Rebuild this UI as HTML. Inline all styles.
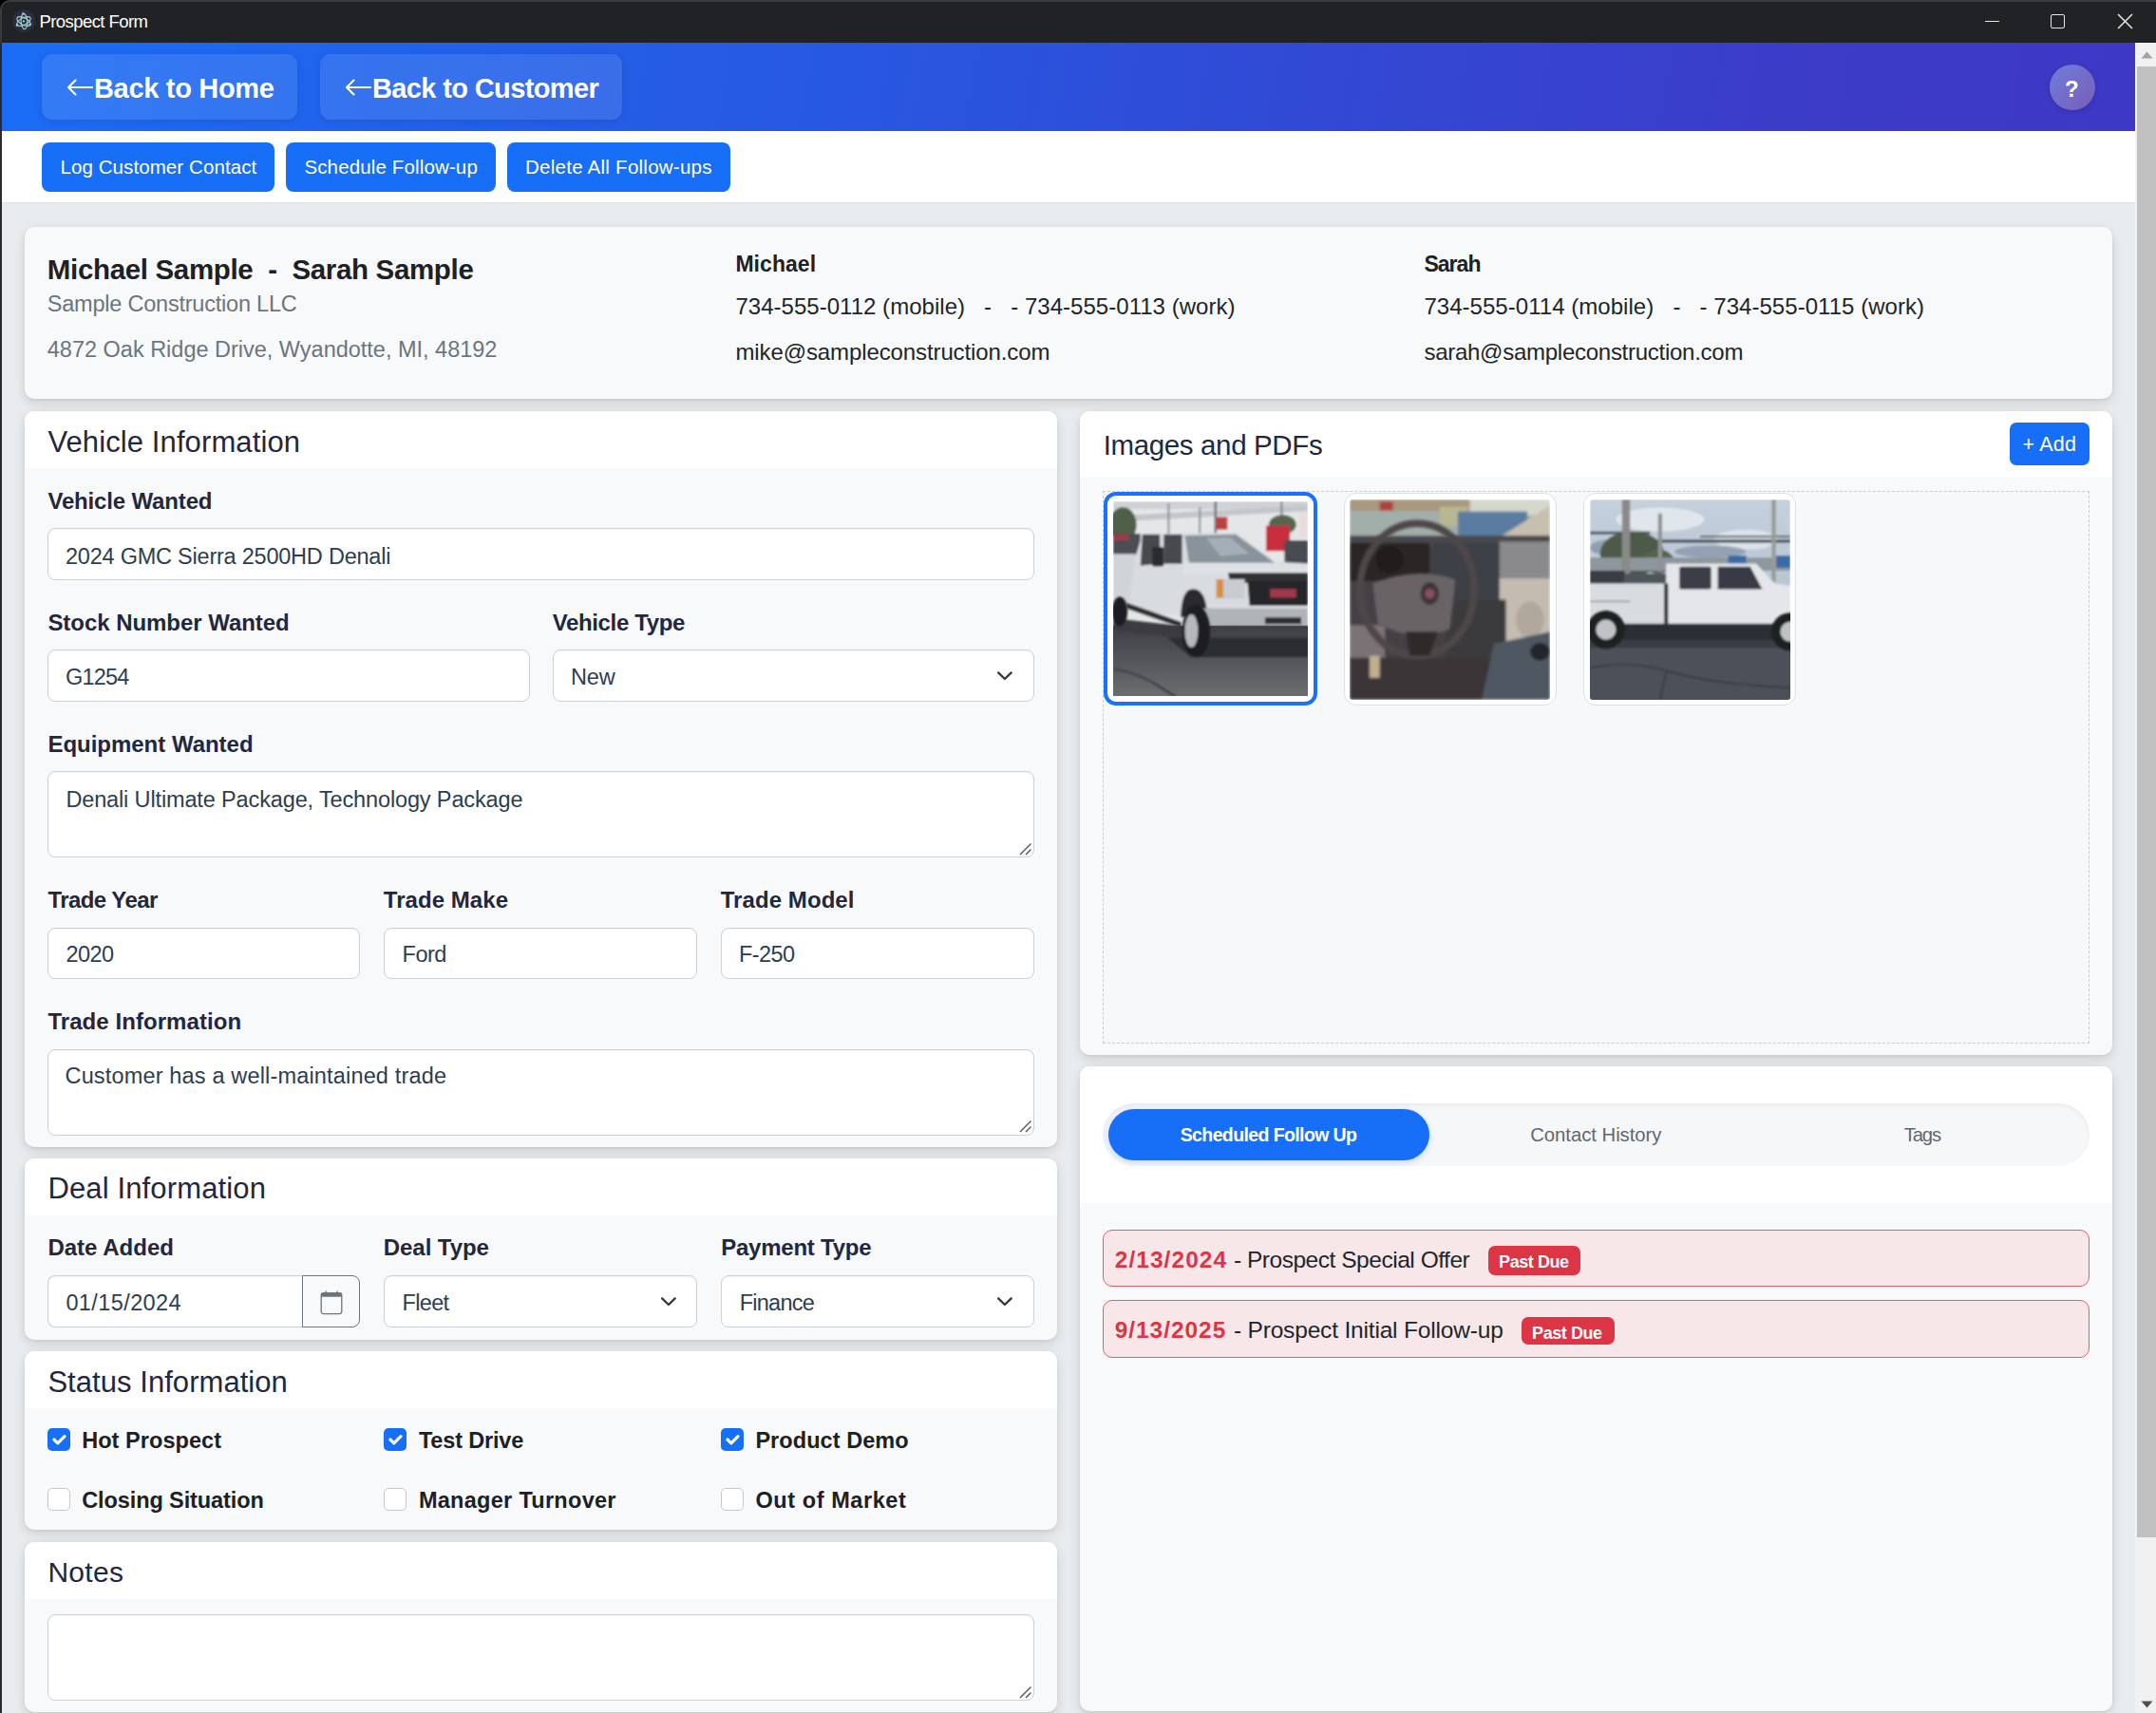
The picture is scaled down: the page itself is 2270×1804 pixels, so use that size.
<!DOCTYPE html>
<html><head><meta charset="utf-8"><title>Prospect Form</title>
<style>
html,body{margin:0;padding:0;}
body{width:2270px;height:1804px;overflow:hidden;position:relative;background:#e9ecef;font-family:"Liberation Sans",sans-serif;}
.t{position:absolute;line-height:1;white-space:pre;}
.b{position:absolute;box-sizing:border-box;}
.card{position:absolute;box-sizing:border-box;background:#f8f9fa;border-radius:10px;box-shadow:0 4px 12px rgba(0,0,0,0.13),0 1px 3px rgba(0,0,0,0.06);overflow:hidden;}
.ch{position:absolute;left:0;top:0;right:0;background:#fff;}
.inp{position:absolute;box-sizing:border-box;background:#fff;border:1.5px solid #cdd1d6;border-radius:8px;box-shadow:inset 0 1px 2px rgba(0,0,0,0.05);}
.btn{position:absolute;box-sizing:border-box;background:#176ef7;border-radius:8px;}
.cb{position:absolute;box-sizing:border-box;width:24px;height:24px;border-radius:5px;}
.cb.on{background:#176ef7;}
.cb.off{background:#fff;border:1.5px solid #c4c8cc;}
</style></head><body>

<div class="b" style="left:0.0px;top:0.0px;width:2270.0px;height:60.0px;background:#000;"></div>
<div class="b" style="left:0.0px;top:0.0px;width:2290.0px;height:60.0px;background:#202226;border:2px solid #3a3a3c;border-bottom:none;border-radius:10px 10px 0 0;"></div>
<div class="b" style="left:0.0px;top:45.0px;width:2.0px;height:1759.0px;background:#2b2b2d;"></div>
<svg class="b" style="left:13px;top:10px;" width="24" height="24" viewBox="0 0 24 24"><circle cx="12" cy="12" r="12" fill="#2b2d3a"/><g fill="none" stroke="#9fcfd8" stroke-width="1.15"><ellipse cx="12" cy="12.5" rx="8" ry="3.6" transform="rotate(28 12 12.5)"/><ellipse cx="12" cy="12.5" rx="8" ry="3.6" transform="rotate(-28 12 12.5)"/><ellipse cx="12.5" cy="12.5" rx="3.3" ry="8.2" transform="rotate(-4 12.5 12.5)"/></g><circle cx="12" cy="12.4" r="1.1" fill="#9fcfd8"/><circle cx="11.5" cy="4.5" r="1.3" fill="#9fcfd8"/><circle cx="5" cy="16.5" r="1.3" fill="#9fcfd8"/><circle cx="18.5" cy="16" r="1.3" fill="#9fcfd8"/></svg>
<div class="t" style="left:41.4px;top:14.0px;font-size:18.5px;font-weight:400;color:#ffffff;letter-spacing:-0.558px;">Prospect Form</div>
<div class="b" style="left:2089.5px;top:21.5px;width:15.5px;height:1.2px;background:#e8e8e8;"></div>
<div class="b" style="left:2159.0px;top:15.0px;width:15.0px;height:15.0px;border:1.5px solid #e8e8e8;border-radius:2px;"></div>
<svg class="b" style="left:2229px;top:14px;" width="17" height="17" viewBox="0 0 17 17"><path d="M1 1L16 16M16 1L1 16" stroke="#e8e8e8" stroke-width="1.5"/></svg>
<div class="b" style="left:2.0px;top:45.0px;width:2246.0px;height:93.0px;background:linear-gradient(100deg,#1b6df5 0%,#2857e1 40%,#3347d3 65%,#3c3cc8 85%,#3e38c6 100%);"></div>
<div class="b" style="left:44.0px;top:57.0px;width:269.0px;height:69.0px;background:rgba(255,255,255,0.10);border-radius:11px;box-shadow:0 2px 8px rgba(0,0,0,0.10);"></div>
<div class="b" style="left:337.0px;top:57.0px;width:318.0px;height:69.0px;background:rgba(255,255,255,0.10);border-radius:11px;box-shadow:0 2px 8px rgba(0,0,0,0.10);"></div>
<svg class="b" style="left:69.6px;top:83.0px;" width="28" height="18" viewBox="0 0 28 18"><path d="M27 9H2M9.5 1.5L2 9L9.5 16.5" fill="none" stroke="#fff" stroke-width="2.1" stroke-linecap="round" stroke-linejoin="round"/></svg>
<div class="t" style="left:99.0px;top:78.8px;font-size:29px;font-weight:700;color:#ffffff;letter-spacing:-0.318px;">Back to Home</div>
<svg class="b" style="left:362.6px;top:83.0px;" width="28" height="18" viewBox="0 0 28 18"><path d="M27 9H2M9.5 1.5L2 9L9.5 16.5" fill="none" stroke="#fff" stroke-width="2.1" stroke-linecap="round" stroke-linejoin="round"/></svg>
<div class="t" style="left:392.0px;top:78.8px;font-size:29px;font-weight:700;color:#ffffff;letter-spacing:-0.63px;">Back to Customer</div>
<div class="b" style="left:2158px;top:68px;width:48px;height:48px;border-radius:50%;background:linear-gradient(135deg,#6f7ddd 0%,#7a5db6 100%);box-shadow:0 2px 6px rgba(0,0,0,0.15);"></div>
<div class="t" style="left:2173.9px;top:81.7px;font-size:24px;font-weight:700;color:#ffffff;">?</div>
<div class="b" style="left:2.0px;top:138.0px;width:2246.0px;height:76.0px;background:#ffffff;border-bottom:1.5px solid #dfe3e7;"></div>
<div class="b" style="left:44.0px;top:150.0px;width:245.0px;height:52.0px;background:#176ef7;border-radius:8px;"></div>
<div class="b" style="left:301.0px;top:150.0px;width:221.0px;height:52.0px;background:#176ef7;border-radius:8px;"></div>
<div class="b" style="left:534.0px;top:150.0px;width:235.0px;height:52.0px;background:#176ef7;border-radius:8px;"></div>
<div class="t" style="left:63.4px;top:166.2px;font-size:20.5px;font-weight:400;color:#ffffff;letter-spacing:0.095px;">Log Customer Contact</div>
<div class="t" style="left:320.4px;top:166.2px;font-size:20.5px;font-weight:400;color:#ffffff;letter-spacing:0.138px;">Schedule Follow-up</div>
<div class="t" style="left:553.0px;top:166.2px;font-size:20.5px;font-weight:400;color:#ffffff;letter-spacing:0.255px;">Delete All Follow-ups</div>
<div class="b" style="left:2248.0px;top:45.0px;width:22.0px;height:1759.0px;background:#f1f1f1;"></div>
<div class="b" style="left:2250.0px;top:70.0px;width:20.0px;height:1548.6px;background:#c1c1c1;"></div>
<svg class="b" style="left:2254px;top:54px;" width="13" height="8" viewBox="0 0 13 8"><path d="M0.5 7.5L6.5 0.5L12.5 7.5Z" fill="#a3a3a3"/></svg>
<svg class="b" style="left:2254px;top:1791px;" width="13" height="8" viewBox="0 0 13 8"><path d="M0.5 0.5L6.5 7.5L12.5 0.5Z" fill="#505050"/></svg>
<div class="card" style="left:26px;top:239px;width:2198px;height:181px;"></div>
<div class="t" style="left:49.8px;top:268.5px;font-size:29.5px;font-weight:700;color:#1d2024;letter-spacing:-0.335px;">Michael Sample  -  Sarah Sample</div>
<div class="t" style="left:49.8px;top:308.9px;font-size:23.5px;font-weight:400;color:#6c757d;letter-spacing:-0.22px;">Sample Construction LLC</div>
<div class="t" style="left:49.8px;top:356.8px;font-size:23.5px;font-weight:400;color:#6c757d;letter-spacing:-0.009px;">4872 Oak Ridge Drive, Wyandotte, MI, 48192</div>
<div class="t" style="left:774.4px;top:267.4px;font-size:23px;font-weight:700;color:#1d2024;letter-spacing:0.058px;">Michael</div>
<div class="t" style="left:774.4px;top:310.7px;font-size:24px;font-weight:400;color:#212529;letter-spacing:0.029px;">734-555-0112 (mobile)   -   - 734-555-0113 (work)</div>
<div class="t" style="left:774.4px;top:358.7px;font-size:24px;font-weight:400;color:#212529;letter-spacing:-0.104px;">mike@sampleconstruction.com</div>
<div class="t" style="left:1499.4px;top:267.4px;font-size:23px;font-weight:700;color:#1d2024;letter-spacing:-0.95px;">Sarah</div>
<div class="t" style="left:1499.4px;top:310.6px;font-size:24px;font-weight:400;color:#212529;letter-spacing:0.04px;">734-555-0114 (mobile)   -   - 734-555-0115 (work)</div>
<div class="t" style="left:1499.4px;top:358.9px;font-size:24px;font-weight:400;color:#212529;letter-spacing:-0.265px;">sarah@sampleconstruction.com</div>
<div class="card" style="left:26px;top:433px;width:1087px;height:774.5px;"><div class="ch" style="height:60px;"></div></div>
<div class="t" style="left:50.4px;top:449.5px;font-size:31px;font-weight:400;color:#23273d;letter-spacing:0.108px;">Vehicle Information</div>
<div class="t" style="left:50.4px;top:515.7px;font-size:24px;font-weight:700;color:#23273d;letter-spacing:-0.158px;">Vehicle Wanted</div>
<div class="inp" style="left:50.0px;top:556.4px;width:1039.0px;height:55.1px;"></div>
<div class="t" style="left:69.0px;top:574.6px;font-size:23.5px;font-weight:400;color:#2c3e50;letter-spacing:-0.227px;">2024 GMC Sierra 2500HD Denali</div>
<div class="t" style="left:50.4px;top:643.7px;font-size:24px;font-weight:700;color:#23273d;letter-spacing:-0.042px;">Stock Number Wanted</div>
<div class="t" style="left:581.7px;top:643.7px;font-size:24px;font-weight:700;color:#23273d;letter-spacing:-0.359px;">Vehicle Type</div>
<div class="inp" style="left:50.0px;top:684.4px;width:507.5px;height:55.1px;"></div>
<div class="inp" style="left:582.3px;top:684.4px;width:506.7px;height:55.1px;"></div>
<div class="t" style="left:69.0px;top:702.1px;font-size:23.5px;font-weight:400;color:#2c3e50;letter-spacing:-0.787px;">G1254</div>
<div class="t" style="left:601.1px;top:702.1px;font-size:23.5px;font-weight:400;color:#2c3e50;letter-spacing:-0.25px;">New</div>
<svg class="b" style="left:1049px;top:705px;" width="18" height="12" viewBox="0 0 18 12"><path d="M2.1 3.4L8.9 10L15.7 3.4" fill="none" stroke="#343a40" stroke-width="2.4" stroke-linecap="round" stroke-linejoin="round"/></svg>
<div class="t" style="left:50.4px;top:772.3px;font-size:24px;font-weight:700;color:#23273d;letter-spacing:-0.017px;">Equipment Wanted</div>
<div class="inp" style="left:50.0px;top:812.3px;width:1039.0px;height:91.0px;"></div>
<div class="t" style="left:69.4px;top:830.6px;font-size:23.5px;font-weight:400;color:#2c3e50;letter-spacing:-0.136px;">Denali Ultimate Package, Technology Package</div>
<svg class="b" style="left:1073px;top:887px;" width="14" height="14" viewBox="0 0 14 14"><path d="M1 13L12.5 1.5M7 13L12.5 7.5" stroke="#555" stroke-width="1.4"/></svg>
<div class="t" style="left:50.4px;top:935.7px;font-size:24px;font-weight:700;color:#23273d;letter-spacing:-0.556px;">Trade Year</div>
<div class="t" style="left:403.8px;top:935.7px;font-size:24px;font-weight:700;color:#23273d;letter-spacing:0.05px;">Trade Make</div>
<div class="t" style="left:758.7px;top:936.2px;font-size:24px;font-weight:700;color:#23273d;letter-spacing:0.075px;">Trade Model</div>
<div class="inp" style="left:50.0px;top:976.5px;width:329.4px;height:54.9px;"></div>
<div class="inp" style="left:404.4px;top:976.5px;width:330.1px;height:54.9px;"></div>
<div class="inp" style="left:759.3px;top:976.5px;width:329.7px;height:54.9px;"></div>
<div class="t" style="left:69.4px;top:993.9px;font-size:23.5px;font-weight:400;color:#2c3e50;letter-spacing:-0.5px;">2020</div>
<div class="t" style="left:423.6px;top:993.9px;font-size:23.5px;font-weight:400;color:#2c3e50;letter-spacing:-0.5px;">Ford</div>
<div class="t" style="left:777.9px;top:993.9px;font-size:23.5px;font-weight:400;color:#2c3e50;letter-spacing:-0.575px;">F-250</div>
<div class="t" style="left:50.4px;top:1063.9px;font-size:24px;font-weight:700;color:#23273d;letter-spacing:0.062px;">Trade Information</div>
<div class="inp" style="left:50.0px;top:1104.6px;width:1039.0px;height:91.0px;"></div>
<div class="t" style="left:68.5px;top:1122.0px;font-size:23.5px;font-weight:400;color:#2c3e50;letter-spacing:0.164px;">Customer has a well-maintained trade</div>
<svg class="b" style="left:1073px;top:1179px;" width="14" height="14" viewBox="0 0 14 14"><path d="M1 13L12.5 1.5M7 13L12.5 7.5" stroke="#555" stroke-width="1.4"/></svg>
<div class="card" style="left:26px;top:1220px;width:1087px;height:190.70000000000005px;"><div class="ch" style="height:60px;"></div></div>
<div class="t" style="left:50.4px;top:1235.6px;font-size:31px;font-weight:400;color:#23273d;letter-spacing:0.143px;">Deal Information</div>
<div class="t" style="left:50.4px;top:1302.2px;font-size:24px;font-weight:700;color:#23273d;letter-spacing:0.006px;">Date Added</div>
<div class="t" style="left:403.8px;top:1302.2px;font-size:24px;font-weight:700;color:#23273d;letter-spacing:-0.062px;">Deal Type</div>
<div class="t" style="left:759.2px;top:1302.2px;font-size:24px;font-weight:700;color:#23273d;letter-spacing:-0.232px;">Payment Type</div>
<div class="inp" style="left:50.0px;top:1343.3px;width:270.0px;height:55.1px;border-radius:8px 0 0 8px;border-right:none;"></div>
<div class="b" style="left:318.0px;top:1343.3px;width:61.4px;height:55.1px;background:#f8f9fa;border:1.5px solid #6c757d;border-radius:0 8px 8px 0;"></div>
<svg class="b" style="left:337px;top:1359px;" width="24" height="26" viewBox="0 0 24 26"><rect x="1.2" y="2.6" width="21.6" height="22" rx="2.5" fill="none" stroke="#6c757d" stroke-width="1.3"/><rect x="1.2" y="2.6" width="21.6" height="4.2" rx="1.5" fill="#6c757d"/><path d="M6 0.5V3M18 0.5V3" stroke="#6c757d" stroke-width="1.3"/></svg>
<div class="t" style="left:69.4px;top:1361.0px;font-size:23.5px;font-weight:400;color:#2c3e50;letter-spacing:0.4px;">01/15/2024</div>
<div class="inp" style="left:404.4px;top:1343.3px;width:330.1px;height:55.1px;"></div>
<div class="inp" style="left:759.3px;top:1343.3px;width:329.7px;height:55.1px;"></div>
<div class="t" style="left:423.6px;top:1361.0px;font-size:23.5px;font-weight:400;color:#2c3e50;letter-spacing:-0.687px;">Fleet</div>
<div class="t" style="left:778.7px;top:1361.0px;font-size:23.5px;font-weight:400;color:#2c3e50;letter-spacing:-0.75px;">Finance</div>
<svg class="b" style="left:695px;top:1364px;" width="18" height="12" viewBox="0 0 18 12"><path d="M2.1 3.4L8.9 10L15.7 3.4" fill="none" stroke="#343a40" stroke-width="2.4" stroke-linecap="round" stroke-linejoin="round"/></svg>
<svg class="b" style="left:1049px;top:1364px;" width="18" height="12" viewBox="0 0 18 12"><path d="M2.1 3.4L8.9 10L15.7 3.4" fill="none" stroke="#343a40" stroke-width="2.4" stroke-linecap="round" stroke-linejoin="round"/></svg>
<div class="card" style="left:26px;top:1423px;width:1087px;height:188.20000000000005px;"><div class="ch" style="height:60px;"></div></div>
<div class="t" style="left:50.4px;top:1439.5px;font-size:31px;font-weight:400;color:#23273d;letter-spacing:0.05px;">Status Information</div>
<div class="cb on" style="left:50px;top:1504px;"><svg width="24" height="24" viewBox="0 0 24 24" style="position:absolute;left:0;top:0"><path d="M6.9 12L10.8 15.8L18 8.6" fill="none" stroke="#fff" stroke-width="3.2" stroke-linecap="round" stroke-linejoin="round"/></svg></div>
<div class="t" style="left:86.2px;top:1505.8px;font-size:23.5px;font-weight:700;color:#1d2024;letter-spacing:0.05px;">Hot Prospect</div>
<div class="cb on" style="left:404px;top:1504px;"><svg width="24" height="24" viewBox="0 0 24 24" style="position:absolute;left:0;top:0"><path d="M6.9 12L10.8 15.8L18 8.6" fill="none" stroke="#fff" stroke-width="3.2" stroke-linecap="round" stroke-linejoin="round"/></svg></div>
<div class="t" style="left:440.9px;top:1505.8px;font-size:23.5px;font-weight:700;color:#1d2024;letter-spacing:-0.167px;">Test Drive</div>
<div class="cb on" style="left:759px;top:1504px;"><svg width="24" height="24" viewBox="0 0 24 24" style="position:absolute;left:0;top:0"><path d="M6.9 12L10.8 15.8L18 8.6" fill="none" stroke="#fff" stroke-width="3.2" stroke-linecap="round" stroke-linejoin="round"/></svg></div>
<div class="t" style="left:795.4px;top:1505.8px;font-size:23.5px;font-weight:700;color:#1d2024;letter-spacing:0.055px;">Product Demo</div>
<div class="cb off" style="left:50px;top:1567.2px;"></div>
<div class="t" style="left:86.2px;top:1569.2px;font-size:23.5px;font-weight:700;color:#1d2024;letter-spacing:-0.1px;">Closing Situation</div>
<div class="cb off" style="left:404px;top:1567.2px;"></div>
<div class="t" style="left:440.9px;top:1569.2px;font-size:23.5px;font-weight:700;color:#1d2024;letter-spacing:0.29px;">Manager Turnover</div>
<div class="cb off" style="left:759px;top:1567.2px;"></div>
<div class="t" style="left:795.4px;top:1569.2px;font-size:23.5px;font-weight:700;color:#1d2024;letter-spacing:0.579px;">Out of Market</div>
<div class="card" style="left:26px;top:1624px;width:1087px;height:178.5999999999999px;"><div class="ch" style="height:60px;"></div></div>
<div class="t" style="left:50.4px;top:1640.6px;font-size:30px;font-weight:400;color:#23273d;letter-spacing:0.288px;">Notes</div>
<div class="inp" style="left:50.0px;top:1699.5px;width:1039.0px;height:91.3px;"></div>
<svg class="b" style="left:1073px;top:1775px;" width="14" height="14" viewBox="0 0 14 14"><path d="M1 13L12.5 1.5M7 13L12.5 7.5" stroke="#555" stroke-width="1.4"/></svg>
<div class="card" style="left:1136.8px;top:433px;width:1087.2px;height:677.7px;"><div class="ch" style="height:69px;"></div></div>
<div class="t" style="left:1161.7px;top:454.0px;font-size:29.5px;font-weight:400;color:#23273d;letter-spacing:-0.364px;">Images and PDFs</div>
<div class="b" style="left:2116.0px;top:445.0px;width:84.0px;height:45.0px;background:#176ef7;border-radius:7px;"></div>
<div class="t" style="left:2129.4px;top:458.4px;font-size:21.5px;font-weight:400;color:#ffffff;letter-spacing:0.25px;">+ Add</div>
<div class="b" style="left:1161.0px;top:517.0px;width:1039.0px;height:582.0px;border:1px dashed #c9cdd1;background:#f7f8f9;"></div>
<div class="b" style="left:1162px;top:517.7px;width:225px;height:225px;border:4px solid #1a73f7;border-radius:13px;background:#fff;"><div class="b" style="left:6px;top:6px;width:205px;height:205px;overflow:hidden;"><svg width="100%" height="100%" viewBox="0 0 100 100" preserveAspectRatio="none" style="display:block">
<defs><linearGradient id="r1" x1="0" y1="0" x2="0" y2="1"><stop offset="0" stop-color="#3e3f44"/><stop offset="1" stop-color="#6c6d71"/></linearGradient>
<filter id="bl1" x="-5%" y="-5%" width="110%" height="110%"><feGaussianBlur stdDeviation="0.45"/></filter></defs>
<g filter="url(#bl1)">
<rect width="100" height="100" fill="#e4e6e8"/>
<rect x="0" y="0" width="100" height="4" fill="#cfd2d5"/>
<path d="M10 7L100 2L100 5L10 10Z" fill="#c2c6ca"/>
<rect x="28" y="1" width="1" height="18" fill="#8e9296"/>
<rect x="44" y="3" width="1" height="16" fill="#8e9296"/>
<rect x="52" y="0" width="1.2" height="18" fill="#6e7276"/>
<rect x="86" y="0" width="1" height="24" fill="#7e8286"/>
<ellipse cx="5" cy="12" rx="7" ry="9" fill="#50604a"/>
<rect x="53" y="8" width="5.7" height="6.5" fill="#c04040"/>
<ellipse cx="87" cy="12" rx="7" ry="5" fill="#56664e"/>
<rect x="78.5" y="12.5" width="12.3" height="13" fill="#c82e3e"/>
<rect x="95.6" y="5.6" width="4.4" height="13" fill="#e8dcdc"/>
<rect x="0" y="16.6" width="14" height="11" fill="#4e4e54"/>
<rect x="0" y="17" width="8" height="3" fill="#9a3a48"/>
<rect x="88" y="20" width="12" height="14" fill="#4a4c52"/>
<!-- truck -->
<rect x="0" y="27" width="11.5" height="28" fill="#d0d4d8"/>
<path d="M11 30L15 17L63 16L83 31L100 32L100 56L47 60L8 56Z" fill="#d8dbdf"/>
<path d="M15 17L24 17L24 32L14 33Z" fill="#46484e"/>
<path d="M26 17L35.4 17L35.4 32L26 32Z" fill="#46484e"/>
<rect x="20" y="23.4" width="6" height="10" rx="1" fill="#2a2c30"/>
<path d="M36.8 17.6L63 17L83 31.6L39 31.6Z" fill="#88939c"/>
<path d="M48 19L60 18.5L70 27L55 28Z" fill="#a4aeb6"/>
<path d="M36 31.6L83 31.6L100 33L100 38.4L36 38Z" fill="#dee1e4"/>
<path d="M59 36.7L100 36.7L100 41.9L60 41.9Z" fill="#303136"/>
<path d="M69 41L100 41L100 53.5L70 53.5Z" fill="#26262c"/>
<rect x="80.6" y="45" width="13.4" height="4.4" fill="#a03848"/>
<rect x="53" y="40" width="14.6" height="10" fill="#c8ccd0"/>
<rect x="53" y="40" width="3.6" height="9.5" fill="#d89040"/>
<path d="M34.7 59.6Q35 45 41 45Q48 45 48.4 59.6Z" fill="#2a2a2e"/>
<path d="M46 55L100 55L100 64L46 64Z" fill="#b0b4b8"/>
<rect x="78" y="59.6" width="18.6" height="3.4" fill="#2e2f33"/>
<path d="M48 64L100 64L100 71L48 71Z" fill="#2e2f33"/>
<rect x="56" y="64" width="8" height="6" fill="#1a1a1e"/>
<path d="M6.7 52L35 62L35 65L6.7 55Z" fill="#2e3034"/>
</g>
<rect x="0" y="64" width="100" height="36" fill="url(#r1)"/>
<g filter="url(#bl1)">
<path d="M0 60L35 64L35 70L0 66Z" fill="#3a3b40"/>
<path d="M28 70L100 70L100 80L40 80Z" fill="#2c2d31"/>
<ellipse cx="42.6" cy="66.7" rx="7.2" ry="13.3" fill="#1e1f22"/>
<ellipse cx="40.2" cy="66.5" rx="3.4" ry="8.5" fill="#b4b8bc"/>
<ellipse cx="3.4" cy="56.5" rx="4" ry="7.5" fill="#1e1f22"/>
<path d="M0 86Q12 88 22 94Q28 98 32 100" stroke="#34353a" stroke-width="0.8" fill="none"/>
</g>
</svg>
</div></div><div class="b" style="left:1414.5px;top:519px;width:224px;height:224px;border:1.2px solid #dde1e5;border-radius:13px;background:#fff;"><div class="b" style="left:5.5px;top:5.5px;width:211px;height:211px;overflow:hidden;border-radius:3px;"><svg width="100%" height="100%" viewBox="0 0 100 100" preserveAspectRatio="none" style="display:block">
<defs><filter id="bl2" x="-5%" y="-5%" width="110%" height="110%"><feGaussianBlur stdDeviation="0.7"/></filter></defs>
<g filter="url(#bl2)">
<rect width="100" height="100" fill="#444044"/>
<rect x="0" y="0" width="100" height="19" fill="#a2aeaa"/>
<rect x="0" y="0" width="60" height="5.6" fill="#a8987e"/>
<rect x="60" y="0" width="40" height="8" fill="#d4d8cc"/>
<rect x="15" y="1" width="6.6" height="4.6" fill="#b04040"/>
<rect x="45" y="3.6" width="13.8" height="9.4" fill="#b8b890"/>
<rect x="54" y="6" width="34.7" height="12.2" fill="#5a7ca0"/>
<path d="M73 20L100 3L100 24L84 26Z" fill="#c8c0ae"/>
<rect x="0" y="18" width="100" height="6" fill="#4a4a4e"/>
<rect x="0" y="21.6" width="40" height="19.2" fill="#2a2628"/>
<ellipse cx="20" cy="30" rx="7" ry="7" fill="#201c1e"/>
<rect x="41.5" y="21.6" width="33.3" height="29.2" fill="#3e4046"/>
<rect x="74.8" y="21" width="25.2" height="22.5" fill="#8a8a8c"/>
<rect x="74.8" y="39.5" width="25.2" height="33.2" fill="#c4bcb0"/>
<ellipse cx="90" cy="60" rx="7" ry="9" fill="#b0a89c"/>
<rect x="48" y="50" width="30" height="30" fill="#3a3a3e"/>
<rect x="0" y="62.7" width="17.6" height="18.3" fill="#7a7274"/>
<rect x="0" y="79" width="100" height="21" fill="#3a3638"/>
<rect x="10" y="78" width="5" height="11" fill="#c0b090"/>
<path d="M72 72L100 66L100 100L66 100Z" fill="#505862"/>
<ellipse cx="95" cy="76" rx="5" ry="4.5" fill="#22262c"/>
</g>
<g filter="url(#bl2)">
<ellipse cx="33.7" cy="45" rx="28.5" ry="33" fill="none" stroke="#4e4648" stroke-width="3.6"/>
<path d="M11.6 42Q33 33 52.8 40L50 64.7Q33 72 14 62Z" fill="#6a6466"/>
<ellipse cx="40" cy="47" rx="4.6" ry="5.6" fill="#3a3436"/>
<ellipse cx="40" cy="47" rx="2.4" ry="2.6" fill="#8a5060"/>
<path d="M28 66L44 66L40 78L30 78Z" fill="#2e2a2c"/>
</g>
</svg>
</div></div><div class="b" style="left:1667px;top:519px;width:224px;height:224px;border:1.2px solid #dde1e5;border-radius:13px;background:#fff;"><div class="b" style="left:5.5px;top:5.5px;width:211px;height:211px;overflow:hidden;border-radius:3px;"><svg width="100%" height="100%" viewBox="0 0 100 100" preserveAspectRatio="none" style="display:block">
<defs><linearGradient id="sk3" x1="0" y1="0" x2="0" y2="1"><stop offset="0" stop-color="#c4d0dc"/><stop offset="1" stop-color="#a9b8c8"/></linearGradient>
<filter id="bl3" x="-5%" y="-5%" width="110%" height="110%"><feGaussianBlur stdDeviation="0.6"/></filter></defs>
<g filter="url(#bl3)">
<rect width="100" height="100" fill="url(#sk3)"/>
<ellipse cx="35" cy="10" rx="22" ry="6" fill="#e0e6ec"/>
<ellipse cx="78" cy="20" rx="16" ry="5" fill="#dde3e9"/>
<ellipse cx="10" cy="24" rx="10" ry="4" fill="#8fa0b2"/>
<ellipse cx="60" cy="26" rx="18" ry="3" fill="#92a2b4"/>
<rect x="0" y="16" width="30" height="1.4" fill="#4a5460"/>
<rect x="26" y="20" width="74" height="1.6" fill="#4a5460"/>
<rect x="55" y="18" width="45" height="1" fill="#5a6470"/>
<ellipse cx="21" cy="27" rx="16" ry="11" fill="#4e5a48"/>
<ellipse cx="34" cy="31" rx="8" ry="6" fill="#56624e"/>
<rect x="0" y="29" width="100" height="6.5" fill="#8e969e"/>
<rect x="69" y="28" width="9" height="5" fill="#3a6aa8"/>
<rect x="93" y="28" width="7" height="6" fill="#3a6aa8"/>
<rect x="16" y="0" width="4" height="41" fill="#8a8a88"/>
<rect x="34" y="7" width="2" height="29" fill="#929292"/>
<rect x="90.7" y="0" width="2" height="41" fill="#9a9a9a"/>
<rect x="0" y="35.5" width="17.4" height="6.5" fill="#3a3c44"/>
<rect x="20" y="38" width="12" height="2.5" fill="#7a9a5a"/>
<rect x="17.4" y="37" width="21" height="5" fill="#50545c"/>
<!-- truck -->
<rect x="0" y="42" width="38" height="20" fill="#d8dbe0"/>
<rect x="0" y="50.5" width="20" height="0.8" fill="#9a9ea4"/>
<path d="M38 32L83 32L92 42L100 43L100 62L38 62Z" fill="#e4e6ea"/>
<rect x="44.6" y="33.5" width="15.9" height="11.3" rx="1" fill="#3a3d46"/>
<path d="M63.8 33.5L80 33.5L86 44.8L63.8 44.8Z" fill="#373a44"/>
<rect x="37" y="42" width="2" height="20" fill="#2e3036"/>
<rect x="0" y="62" width="100" height="10.7" fill="#2c2e34"/>
</g>
<rect x="0" y="72" width="100" height="28" fill="#4c5058"/>
<g filter="url(#bl3)">
<rect x="0" y="70" width="100" height="4" fill="#3a3d44"/>
<circle cx="8" cy="65" r="9.5" fill="#1e2024"/>
<circle cx="8" cy="65" r="5" fill="#c0c2c6"/>
<circle cx="100" cy="66" r="9.5" fill="#1e2024"/>
<circle cx="100" cy="66" r="5" fill="#c0c2c6"/>
<path d="M0 84Q20 80 40 86T100 94" stroke="#363940" stroke-width="0.7" fill="none"/>
<path d="M35 100L38 86" stroke="#363940" stroke-width="0.7" fill="none"/>
</g>
</svg>
</div></div>
<div class="card" style="left:1136.8px;top:1123.2px;width:1087.2px;height:678.5999999999999px;"><div class="ch" style="height:144px;"></div></div>
<div class="b" style="left:1161.0px;top:1162.0px;width:1039.0px;height:66.0px;background:#f6f7f9;border-radius:33px;box-shadow:inset 0 2px 4px rgba(0,0,0,0.06);"></div>
<div class="b" style="left:1167.0px;top:1168.0px;width:338.0px;height:54.0px;background:#176ef7;border-radius:27px;box-shadow:0 2px 6px rgba(13,110,253,0.25);"></div>
<div class="t" style="left:1242.7px;top:1186.0px;font-size:19.5px;font-weight:700;color:#ffffff;letter-spacing:-0.606px;">Scheduled Follow Up</div>
<div class="t" style="left:1611.2px;top:1185.1px;font-size:20.3px;font-weight:400;color:#5f676f;letter-spacing:-0.025px;">Contact History</div>
<div class="t" style="left:2004.7px;top:1185.1px;font-size:20.3px;font-weight:400;color:#5f676f;letter-spacing:-1.133px;">Tags</div>
<div class="b" style="left:1161.0px;top:1294.5px;width:1039.0px;height:60.6px;background:#f8e7e9;border:1.5px solid #e35d6a;border-radius:10px;"></div>
<div class="t" style="left:1173.7px;top:1315.0px;font-size:24.5px;font-weight:700;color:#dc3545;letter-spacing:1.062px;">2/13/2024</div>
<div class="t" style="left:1298.9px;top:1315.0px;font-size:24.5px;font-weight:400;color:#212529;letter-spacing:-0.467px;">- Prospect Special Offer</div>
<div class="b" style="left:1567.3px;top:1312.0px;width:96.3px;height:30.6px;background:#dc3545;border-radius:7px;"></div>
<div class="t" style="left:1578.1px;top:1319.9px;font-size:18px;font-weight:700;color:#ffffff;letter-spacing:-0.436px;">Past Due</div>
<div class="b" style="left:1161.0px;top:1368.5px;width:1039.0px;height:61.0px;background:#f8e7e9;border:1.5px solid #e35d6a;border-radius:10px;"></div>
<div class="t" style="left:1173.7px;top:1389.0px;font-size:24.5px;font-weight:700;color:#dc3545;letter-spacing:0.95px;">9/13/2025</div>
<div class="t" style="left:1298.9px;top:1389.0px;font-size:24.5px;font-weight:400;color:#212529;letter-spacing:-0.176px;">- Prospect Initial Follow-up</div>
<div class="b" style="left:1602.3px;top:1387.2px;width:97.4px;height:29.2px;background:#dc3545;border-radius:7px;"></div>
<div class="t" style="left:1613.1px;top:1395.1px;font-size:18px;font-weight:700;color:#ffffff;letter-spacing:-0.436px;">Past Due</div>
</body></html>
